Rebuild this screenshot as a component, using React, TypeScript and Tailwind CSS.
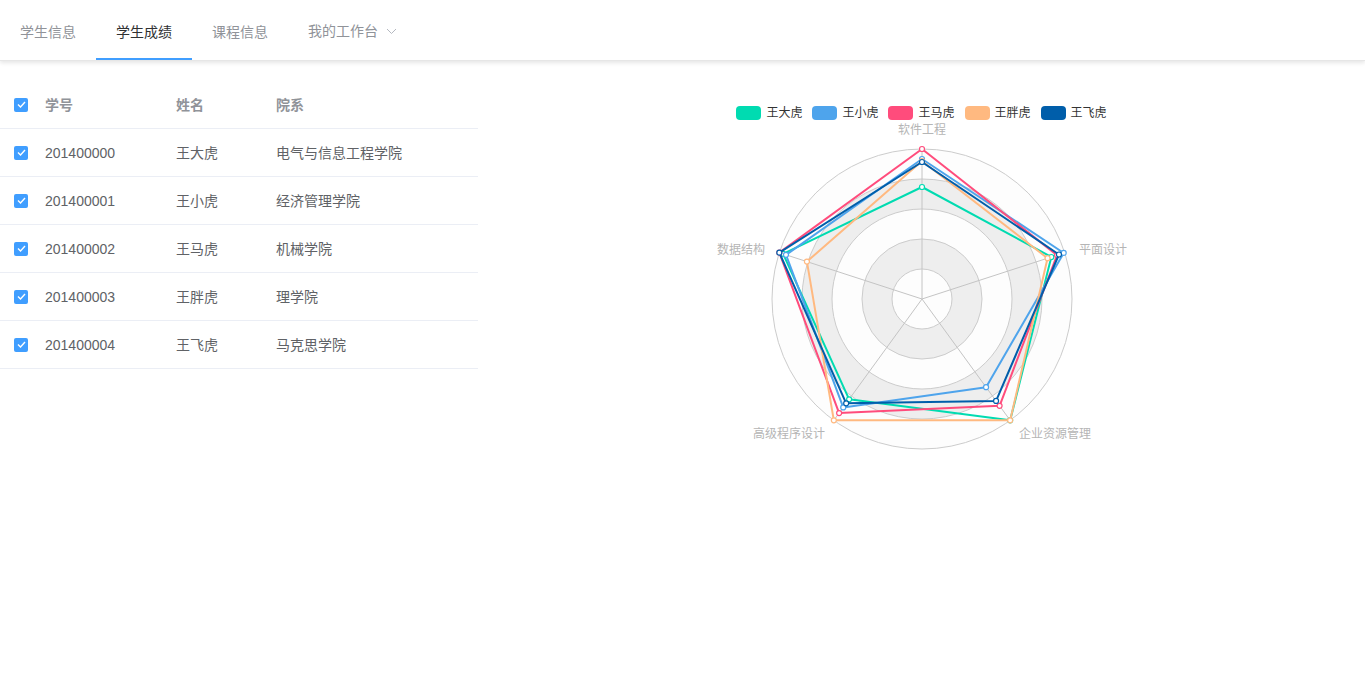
import React from "react";

const FONT = { fontFamily: '"Liberation Sans", "Noto Sans CJK SC", sans-serif' };

const TABS = ["学生信息", "学生成绩", "课程信息"];

const STUDENTS = [
  { id: "201400000", name: "王大虎", dept: "电气与信息工程学院" },
  { id: "201400001", name: "王小虎", dept: "经济管理学院" },
  { id: "201400002", name: "王马虎", dept: "机械学院" },
  { id: "201400003", name: "王胖虎", dept: "理学院" },
  { id: "201400004", name: "王飞虎", dept: "马克思学院" },
];

// radii (out of 150) per axis: top, upper-right, lower-right, lower-left, upper-left
const SERIES = [
  { name: "王大虎", color: "#00dbb1", r: [112, 136, 150, 124, 146] },
  { name: "王小虎", color: "#4ea4ec", r: [140, 149, 109, 134, 143] },
  { name: "王马虎", color: "#ff4c7c", r: [150, 142, 132, 141, 150] },
  { name: "王胖虎", color: "#ffb980", r: [138, 132, 150, 150, 121] },
  { name: "王飞虎", color: "#005eaa", r: [137, 144, 126, 129, 150] },
];

const DIRS: [number, number][] = [
  [0, -1],
  [0.9511, -0.309],
  [0.5878, 0.809],
  [-0.5878, 0.809],
  [-0.9511, -0.309],
];

const CX = 444;
const CY = 179;

function Check() {
  return (
    <span className="flex h-[14px] w-[14px] items-center justify-center rounded-[2px] bg-[#409eff]">
      <svg width="9" height="7" viewBox="0 0 9 7" fill="none">
        <path d="M1 3.5 L3.5 6 L8 1" stroke="white" strokeWidth="1.4" />
      </svg>
    </span>
  );
}

function Radar() {
  const pt = (i: number, r: number) => `${CX + DIRS[i][0] * r},${CY + DIRS[i][1] * r}`;
  const labelStyle = { fontSize: 12, fill: "#b5b5b5", ...FONT };
  return (
    <svg width="887" height="360" viewBox="0 0 887 360">
      {[150, 120, 90, 60, 30].map((r, i) => (
        <circle key={r} cx={CX} cy={CY} r={r} fill={i % 2 === 0 ? "#fdfdfd" : "#eeeeee"} stroke="#cccccc" strokeWidth="1" />
      ))}
      {DIRS.map((_, i) => (
        <line key={i} x1={CX} y1={CY} x2={CX + DIRS[i][0] * 150} y2={CY + DIRS[i][1] * 150} stroke="#c4c4c4" strokeWidth="1" />
      ))}
      {SERIES.map((s) => (
        <g key={s.name}>
          <polygon points={s.r.map((r, i) => pt(i, r)).join(" ")} fill="none" stroke={s.color} strokeWidth="2" strokeLinejoin="round" />
          {s.r.map((r, i) => (
            <circle key={i} cx={CX + DIRS[i][0] * r} cy={CY + DIRS[i][1] * r} r="2.5" fill="white" stroke={s.color} strokeWidth="1.2" />
          ))}
        </g>
      ))}
      <text x={CX} y={CY - 168} textAnchor="middle" dominantBaseline="middle" style={labelStyle}>软件工程</text>
      <text x={CX + 157} y={CY - 48} textAnchor="start" dominantBaseline="middle" style={labelStyle}>平面设计</text>
      <text x={CX + 97} y={CY + 136} textAnchor="start" dominantBaseline="middle" style={labelStyle}>企业资源管理</text>
      <text x={CX - 97} y={CY + 136} textAnchor="end" dominantBaseline="middle" style={labelStyle}>高级程序设计</text>
      <text x={CX - 157} y={CY - 48} textAnchor="end" dominantBaseline="middle" style={labelStyle}>数据结构</text>
    </svg>
  );
}

export default function App() {
  return (
    <div className="min-h-screen bg-white" style={FONT}>
      <div className="flex h-[61px] border-b border-[#e6e6e6] shadow-[0_2px_4px_rgba(0,0,0,0.1)]">
        {TABS.map((t, i) => (
          <div
            key={t}
            className={
              i === 1
                ? "flex h-[60px] items-center border-b-2 border-[#409eff] px-5 pt-[6px] text-sm text-[#303133]"
                : "flex h-[60px] items-center border-b-2 border-transparent px-5 pt-[6px] text-sm text-[#909399]"
            }
          >
            {t}
          </div>
        ))}
        <div className="flex h-[60px] items-center px-5 pt-[2px] text-sm text-[#909399]">
          我的工作台
          <svg className="ml-2" width="11" height="7" viewBox="0 0 11 7" fill="none">
            <path d="M1 1 L5.5 5.5 L10 1" stroke="#b4b8c0" strokeWidth="1" />
          </svg>
        </div>
      </div>

      <div className="flex pt-[20px]">
        <div className="w-[478px] text-sm">
          <div className="flex h-[48px] items-center border-b border-[#ebeef5] font-bold text-[#909399]">
            <div className="w-[35px] pl-[14px]"><Check /></div>
            <div className="w-[131px] px-[10px]">学号</div>
            <div className="w-[100px] px-[10px]">姓名</div>
            <div className="flex-1 px-[10px]">院系</div>
          </div>
          {STUDENTS.map((s) => (
            <div key={s.id} className="flex h-[48px] items-center border-b border-[#ebeef5] text-[#606266]">
              <div className="w-[35px] pl-[14px]"><Check /></div>
              <div className="w-[131px] px-[10px]">{s.id}</div>
              <div className="w-[100px] px-[10px]">{s.name}</div>
              <div className="flex-1 px-[10px]">{s.dept}</div>
            </div>
          ))}
        </div>

        <div className="flex flex-1 flex-col items-center">
          <div className="mt-[25px] flex h-[14px] items-center gap-[10px] text-xs text-[#333]">
            {SERIES.map((s) => (
              <div key={s.name} className="flex items-center gap-[5px]">
                <span className="h-[14px] w-[25px] rounded-[4px]" style={{ backgroundColor: s.color }} />
                <span className="leading-[14px]">{s.name}</span>
              </div>
            ))}
          </div>
          <Radar />
        </div>
      </div>
    </div>
  );
}
